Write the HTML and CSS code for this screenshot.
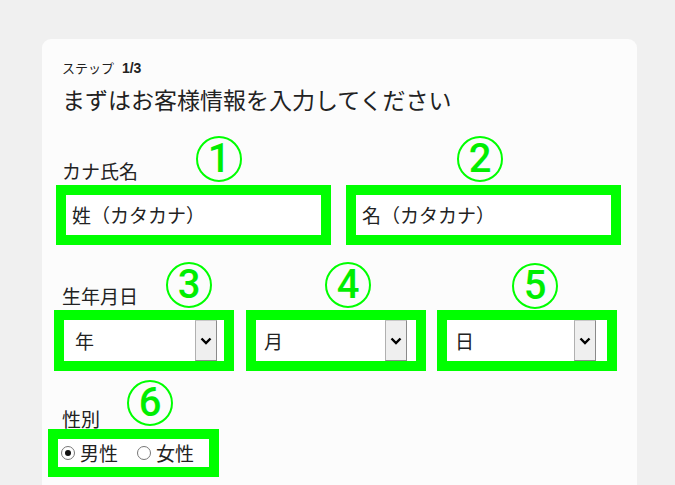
FILE: index.html
```html
<!DOCTYPE html>
<html lang="ja">
<head>
<meta charset="utf-8">
<title>ステップ 1/3</title>
<link rel="stylesheet" href="styles.css">
</head>
<body>
<div class="card">
  <div class="step">ステップ <b>1/3</b></div>
  <h1 class="title">まずはお客様情報を入力してください</h1>

  <div class="label label-name">カナ氏名</div>
  <div class="row name-row">
    <div class="box text-box"><span class="value">姓（カタカナ）</span></div>
    <div class="box text-box"><span class="value">名（カタカナ）</span></div>
  </div>

  <div class="label label-birth">生年月日</div>
  <div class="row date-row">
    <div class="box select-box sel-year">
      <span class="value">年</span>
      <span class="arrow"><svg width="12" height="8" viewBox="0 0 12 8"><polyline points="1.5,1.5 6,6 10.5,1.5" fill="none" stroke="#000" stroke-width="2.4"/></svg></span>
    </div>
    <div class="box select-box sel-month">
      <span class="value">月</span>
      <span class="arrow"><svg width="12" height="8" viewBox="0 0 12 8"><polyline points="1.5,1.5 6,6 10.5,1.5" fill="none" stroke="#000" stroke-width="2.4"/></svg></span>
    </div>
    <div class="box select-box sel-day">
      <span class="value">日</span>
      <span class="arrow"><svg width="12" height="8" viewBox="0 0 12 8"><polyline points="1.5,1.5 6,6 10.5,1.5" fill="none" stroke="#000" stroke-width="2.4"/></svg></span>
    </div>
  </div>

  <div class="label label-gender">性別</div>
  <div class="box gender-box">
    <label class="radio"><span class="dot checked"></span>男性</label>
    <label class="radio radio-second"><span class="dot"></span>女性</label>
  </div>

  <span class="mark m1">1</span>
  <span class="mark m2">2</span>
  <span class="mark m3">3</span>
  <span class="mark m4">4</span>
  <span class="mark m5">5</span>
  <span class="mark m6">6</span>
</div>
</body>
</html>
```

FILE: styles.css
```css
html, body {
  margin: 0;
  padding: 0;
}
body {
  background: #f0f0f0;
  font-family: "Noto Sans CJK JP", "Noto Sans", sans-serif;
  color: #222;
  overflow: hidden;
  height: 485px;
}
.card {
  position: relative;
  margin: 39px 0 0 42px;
  width: 595px;
  height: 446px;
  box-sizing: border-box;
  background: #fcfcfc;
  border-radius: 9px 9px 0 0;
  padding: 20px 16px 0 14px;
}
.step {
  font-size: 13px;
  line-height: 18px;
  padding-left: 6px;
}
.step b {
  font-family: "Liberation Sans", sans-serif;
  font-size: 14px;
  font-weight: bold;
  margin-left: 5px;
}
.title {
  margin: 7px 0 0;
  font-size: 23px;
  line-height: 30px;
  font-weight: normal;
  padding-left: 6px;
}
.label {
  font-size: 19px;
  line-height: 20px;
  padding-left: 6px;
}
.label-name { margin-top: 47px; }
.label-birth { margin-top: 41px; }
.label-gender { margin-top: 38px; }

.row {
  display: flex;
}
.name-row {
  gap: 15px;
  margin-top: 4px;
}
.box {
  box-sizing: border-box;
  border: 10px solid #00ff00;
  background: #fff;
  display: flex;
  align-items: center;
}
.text-box {
  width: 275px;
  height: 60px;
}
.value {
  font-size: 19px;
  line-height: 22px;
}
.text-box .value {
  padding-left: 6px;
}
.date-row {
  gap: 12px;
  margin-top: 4px;
  margin-left: -2px;
}
.select-box {
  width: 180px;
  height: 61px;
  align-items: stretch;
}
.select-box .value {
  flex: 1;
  display: flex;
  align-items: center;
  padding-left: 8px;
}
.sel-year .value { padding-left: 11px; }
.sel-year .arrow { margin-right: 7px; }
.sel-month .arrow { margin-right: 9px; }
.sel-day { margin-left: -1px; }
.sel-day .arrow { margin-right: 11px; }
.arrow {
  width: 22px;
  box-sizing: border-box;
  background: #efefef;
  border: 1px solid #8a8a8a;
  border-top-color: #c8c8c8;
  border-left-color: #b0b0b0;
  display: flex;
  align-items: center;
  justify-content: center;
}
.gender-box {
  width: 171px;
  height: 48px;
  margin-left: -8px;
  padding-left: 3px;
  font-size: 19px;
}
.radio {
  display: flex;
  align-items: center;
  line-height: 22px;
}
.radio-second {
  margin-left: 19px;
}
.dot {
  width: 14px;
  height: 14px;
  box-sizing: border-box;
  border: 1px solid #777;
  border-radius: 50%;
  background: #fff;
  margin-right: 5px;
  position: relative;
}
.dot.checked::after {
  content: "";
  position: absolute;
  left: 3px;
  top: 3px;
  width: 6px;
  height: 6px;
  border-radius: 50%;
  background: #111;
}
.mark {
  position: absolute;
  width: 46px;
  height: 46px;
  box-sizing: border-box;
  border: 2px solid #00ff00;
  border-radius: 50%;
  color: #00ee00;
  font-family: "Roboto", "Liberation Sans", sans-serif;
  font-weight: 500;
  font-size: 40px;
  line-height: 42px;
  text-align: center;
}
.m1 { left: 154px; top: 97px; }
.m2 { left: 415px; top: 97px; }
.m3 { left: 124px; top: 223px; }
.m4 { left: 283px; top: 223px; }
.m5 { left: 470px; top: 224px; }
.m6 { left: 85px; top: 341px; }
```
